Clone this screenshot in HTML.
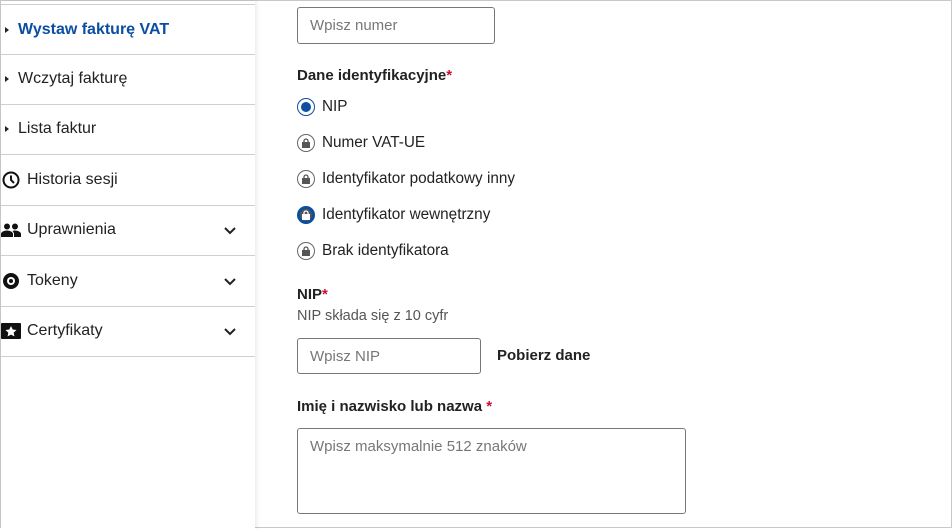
<!DOCTYPE html>
<html><head><meta charset="utf-8"><style>
*{box-sizing:border-box;margin:0;padding:0}
body{width:952px;height:528px;overflow:hidden;background:#fff;font-family:"Liberation Sans",sans-serif;color:#222;position:relative;border:1px solid #c8c8c8}
.side{position:absolute;left:0;top:0;width:254px;height:528px;background:#fff;box-shadow:2px 0 4px rgba(0,0,0,.08)}
.item{position:absolute;left:0;width:254px;height:51px;border-bottom:1px solid #cfcfcf;display:flex;align-items:center;font-size:16px;color:#222}
.tri{width:0;height:0;border-left:4px solid #222;border-top:3px solid transparent;border-bottom:3px solid transparent;margin:0 9px 0 4px}
.ico{width:20px;margin:0 6px 0 0;display:flex;justify-content:center}
.chev{position:absolute;right:19px;top:22px}
.main{position:absolute;left:296px;top:0}
.inp{position:absolute;border:1px solid #777;border-radius:3px;font-size:15px;color:#777;padding:0 12px;display:flex;align-items:center}
.lbl{position:absolute;font-weight:bold;font-size:15px;color:#222;white-space:nowrap}
.req{color:#c8102e}
.r{position:absolute;left:0;display:flex;align-items:center;font-size:15.3px;white-space:nowrap}
.rc{width:18px;height:18px;border-radius:50%;border:1.5px solid #666;margin-right:7px;display:flex;align-items:center;justify-content:center}
</style></head><body>
<div class="side">
 <div class="item" style="top:3px;height:51px;border-top:1px solid #cfcfcf"><span class="tri"></span><b style="color:#0b4ea2;font-size:16px">Wystaw fakturę VAT</b></div>
 <div class="item" style="top:53px"><span class="tri"></span>Wczytaj fakturę</div>
 <div class="item" style="top:103px"><span class="tri"></span>Lista faktur</div>
 <div class="item" style="top:154px"><span class="ico"><svg width="18" height="18" viewBox="0 0 18 18"><circle cx="9" cy="9" r="7.5" fill="none" stroke="#111" stroke-width="2"/><path d="M9 4.5V9l3 3" fill="none" stroke="#111" stroke-width="2"/></svg></span>Historia sesji</div>
 <div class="item" style="top:204px"><span class="ico"><svg width="20" height="14" viewBox="0 0 20 14"><circle cx="6" cy="3.5" r="3" fill="#111"/><circle cx="14" cy="3.5" r="3" fill="#111"/><path d="M0 14v-3c0-2 3-3.5 6-3.5s6 1.5 6 3.5v3zM13 14v-3c0-1-.5-2-1.5-3 1-.3 1.8-.5 2.5-.5 3 0 6 1.5 6 3.5v3z" fill="#111"/></svg></span>Uprawnienia<svg class="chev" width="12" height="8" viewBox="0 0 12 8"><path d="M1 1l5 5 5-5" fill="none" stroke="#222" stroke-width="2"/></svg></div>
 <div class="item" style="top:255px"><span class="ico"><svg width="18" height="18" viewBox="0 0 18 18"><circle cx="9" cy="9" r="8" fill="#111"/><circle cx="9" cy="9" r="4" fill="#fff"/><circle cx="9" cy="9" r="2" fill="#111"/></svg></span>Tokeny<svg class="chev" width="12" height="8" viewBox="0 0 12 8"><path d="M1 1l5 5 5-5" fill="none" stroke="#222" stroke-width="2"/></svg></div>
 <div class="item" style="top:305px"><span class="ico"><svg width="20" height="16" viewBox="0 0 20 16"><rect x="0" y="0" width="20" height="16" rx="1" fill="#111"/><path d="M10 3l1.7 3.5 3.8.5-2.8 2.6.7 3.8L10 11.6l-3.4 1.8.7-3.8L4.5 7l3.8-.5z" fill="#fff"/></svg></span>Certyfikaty<svg class="chev" width="12" height="8" viewBox="0 0 12 8"><path d="M1 1l5 5 5-5" fill="none" stroke="#222" stroke-width="2"/></svg></div>
</div>
<div class="main">
 <div class="inp" style="left:0;top:6px;width:198px;height:37px">Wpisz numer</div>
 <div class="lbl" style="top:66px">Dane identyfikacyjne<span class="req">*</span></div>
 <div class="r" style="top:97px"><span class="rc" style="border-color:#0b4ea2"><span style="width:10px;height:10px;border-radius:50%;background:#0b4ea2"></span></span>NIP</div>
 <div class="r" style="top:133px"><span class="rc"><svg width="8" height="10" viewBox="0 0 8 10"><path d="M2 4V3a2 2 0 014 0v1" fill="none" stroke="#555" stroke-width="1.3"/><rect x="0" y="4" width="8" height="6" fill="#555"/></svg></span>Numer VAT-UE</div>
 <div class="r" style="top:169px"><span class="rc"><svg width="8" height="10" viewBox="0 0 8 10"><path d="M2 4V3a2 2 0 014 0v1" fill="none" stroke="#555" stroke-width="1.3"/><rect x="0" y="4" width="8" height="6" fill="#555"/></svg></span>Identyfikator podatkowy inny</div>
 <div class="r" style="top:205px"><span class="rc" style="border:3px solid #0b4ea2;background:#555"><svg width="8" height="10" viewBox="0 0 8 10"><path d="M2 4V3a2 2 0 014 0v1" fill="none" stroke="#fff" stroke-width="1.3"/><rect x="0" y="4" width="8" height="6" fill="#fff"/></svg></span>Identyfikator wewnętrzny</div>
 <div class="r" style="top:241px"><span class="rc"><svg width="8" height="10" viewBox="0 0 8 10"><path d="M2 4V3a2 2 0 014 0v1" fill="none" stroke="#555" stroke-width="1.3"/><rect x="0" y="4" width="8" height="6" fill="#555"/></svg></span>Brak identyfikatora</div>
 <div class="lbl" style="top:285px">NIP<span class="req">*</span></div>
 <div style="position:absolute;top:307px;font-size:14.5px;color:#555;white-space:nowrap">NIP składa się z 10 cyfr</div>
 <div class="inp" style="left:0;top:337px;width:184px;height:36px">Wpisz NIP</div>
 <div class="lbl" style="left:200px;top:346px">Pobierz dane</div>
 <div class="lbl" style="top:397px">Imię i nazwisko lub nazwa <span class="req">*</span></div>
 <div class="inp" style="left:0;top:427px;width:389px;height:86px;align-items:flex-start;padding-top:9px">Wpisz maksymalnie 512 znaków</div>
</div>
</body></html>
